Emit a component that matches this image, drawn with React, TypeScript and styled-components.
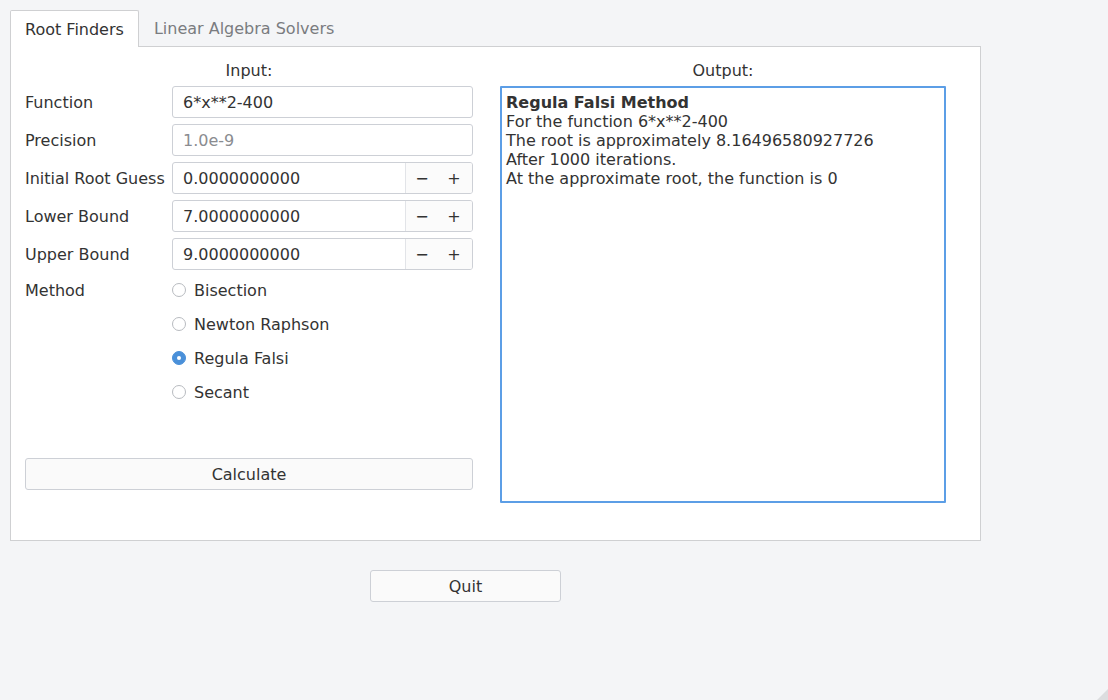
import React from 'react';
import styled, { createGlobalStyle } from 'styled-components';

const GlobalStyle = createGlobalStyle`
	html, body {
		margin: 0;
		padding: 0;
		background: #f4f5f7;
		font-family: 'DejaVu Sans', 'Liberation Sans', sans-serif;
		font-size: 16px;
		color: #333333;
	}
`;

const Window = styled.div`
	position: relative;
	width: 1108px;
	height: 700px;
	box-sizing: border-box;
	padding: 10px 0 0 10px;
	overflow: hidden;
`;

const TabBar = styled.div`
	display: flex;
	align-items: flex-end;
	height: 36px;
`;

const Tab = styled.div<{ active?: boolean }>`
	box-sizing: border-box;
	height: ${props => (props.active ? '37px' : '36px')};
	padding: 0 14px;
	display: flex;
	align-items: center;
	background: ${props => (props.active ? '#ffffff' : 'transparent')};
	border: 1px solid ${props => (props.active ? '#cfd0d2' : 'transparent')};
	border-bottom: none;
	border-radius: 2px 2px 0 0;
	color: ${props => (props.active ? '#333333' : '#7a7c80')};
	position: relative;
	z-index: 1;
	margin-bottom: ${props => (props.active ? '-1px' : '0')};
`;

const Panel = styled.div`
	box-sizing: border-box;
	width: 971px;
	height: 495px;
	background: #ffffff;
	border: 1px solid #cfd0d2;
	padding: 9px 34px 0 14px;
	display: grid;
	grid-template-columns: 448px 446px;
	column-gap: 27px;
`;

const Column = styled.div`
	display: flex;
	flex-direction: column;
`;

const Heading = styled.div`
	height: 30px;
	line-height: 29px;
	text-align: center;
`;

const Row = styled.div`
	display: flex;
	align-items: center;
	height: 32px;
	margin-bottom: 6px;
`;

const Label = styled.div`
	width: 147px;
	flex: none;
	white-space: nowrap;
`;

const Field = styled.div`
	flex: 1;
	box-sizing: border-box;
	height: 32px;
	display: flex;
	align-items: center;
	border: 1px solid #cdd0d6;
	border-radius: 3px;
	background: #ffffff;
	overflow: hidden;
`;

const FieldText = styled.div<{ placeholder?: boolean }>`
	flex: 1;
	padding-left: 10px;
	color: ${props => (props.placeholder ? '#8a8c90' : '#333333')};
`;

const Steppers = styled.div`
	display: flex;
	height: 100%;
	padding-right: 2px;
	border-left: 1px solid #e2e4e8;
	background: #fbfbfb;
`;

const Step = styled.div`
	width: 32px;
	display: flex;
	align-items: center;
	justify-content: center;
	color: #333333;
`;

const MethodRow = styled.div`
	display: flex;
	align-items: flex-start;
	margin-top: -3px;
`;

const MethodLabel = styled(Label)`
	line-height: 35px;
`;

const Options = styled.div`
	display: flex;
	flex-direction: column;
`;

const Option = styled.div`
	display: flex;
	align-items: center;
	height: 34px;
`;

const Radio = styled.span<{ checked?: boolean }>`
	box-sizing: border-box;
	width: 14px;
	height: 14px;
	border-radius: 50%;
	margin-right: 8px;
	border: 1px solid ${props => (props.checked ? '#4a90d9' : '#b8bbc0')};
	background: ${props => (props.checked ? '#4a90d9' : '#ffffff')};
	display: flex;
	align-items: center;
	justify-content: center;
	&::after {
		content: '';
		width: 4px;
		height: 4px;
		border-radius: 50%;
		background: ${props => (props.checked ? '#ffffff' : 'transparent')};
	}
`;

const Button = styled.div<{ width?: number }>`
	box-sizing: border-box;
	width: ${props => (props.width ? `${props.width}px` : '100%')};
	height: 32px;
	display: flex;
	align-items: center;
	justify-content: center;
	background: #fafafa;
	border: 1px solid #cdd0d6;
	border-radius: 3px;
	color: #333333;
`;

const Spacer = styled.div`
	height: 49px;
`;

const Output = styled.div`
	box-sizing: border-box;
	height: 417px;
	border: 2px solid #5c9ee6;
	border-radius: 1px;
	padding: 5px 4px;
	line-height: 19px;
	white-space: pre;
`;

const Bold = styled.div`
	font-weight: bold;
`;

const Footer = styled.div`
	padding: 29px 0 0 360px;
`;

const Grip = styled.div`
	position: absolute;
	right: 0;
	bottom: 0;
	width: 0;
	height: 0;
	border-left: 11px solid transparent;
	border-bottom: 11px solid #dcdddf;
`;

const methods = ['Bisection', 'Newton Raphson', 'Regula Falsi', 'Secant'];

const spins = [
	{ label: 'Initial Root Guess', value: '0.0000000000' },
	{ label: 'Lower Bound', value: '7.0000000000' },
	{ label: 'Upper Bound', value: '9.0000000000' },
];

const App = () => {
	return (
		<Window>
			<GlobalStyle />
			<TabBar>
				<Tab active>Root Finders</Tab>
				<Tab>Linear Algebra Solvers</Tab>
			</TabBar>
			<Panel>
				<Column>
					<Heading>Input:</Heading>
					<Row>
						<Label>Function</Label>
						<Field>
							<FieldText>6*x**2-400</FieldText>
						</Field>
					</Row>
					<Row>
						<Label>Precision</Label>
						<Field>
							<FieldText placeholder>1.0e-9</FieldText>
						</Field>
					</Row>
					{spins.map(s => (
						<Row key={s.label}>
							<Label>{s.label}</Label>
							<Field>
								<FieldText>{s.value}</FieldText>
								<Steppers>
									<Step>−</Step>
									<Step>+</Step>
								</Steppers>
							</Field>
						</Row>
					))}
					<MethodRow>
						<MethodLabel>Method</MethodLabel>
						<Options>
							{methods.map(m => (
								<Option key={m}>
									<Radio checked={m === 'Regula Falsi'} />
									{m}
								</Option>
							))}
						</Options>
					</MethodRow>
					<Spacer />
					<Button>Calculate</Button>
				</Column>
				<Column>
					<Heading>Output:</Heading>
					<Output>
						<Bold>Regula Falsi Method</Bold>
						{'For the function 6*x**2-400\nThe root is approximately 8.16496580927726\nAfter 1000 iterations.\nAt the approximate root, the function is 0'}
					</Output>
				</Column>
			</Panel>
			<Footer>
				<Button width={191}>Quit</Button>
			</Footer>
			<Grip />
		</Window>
	);
};

export default App;
